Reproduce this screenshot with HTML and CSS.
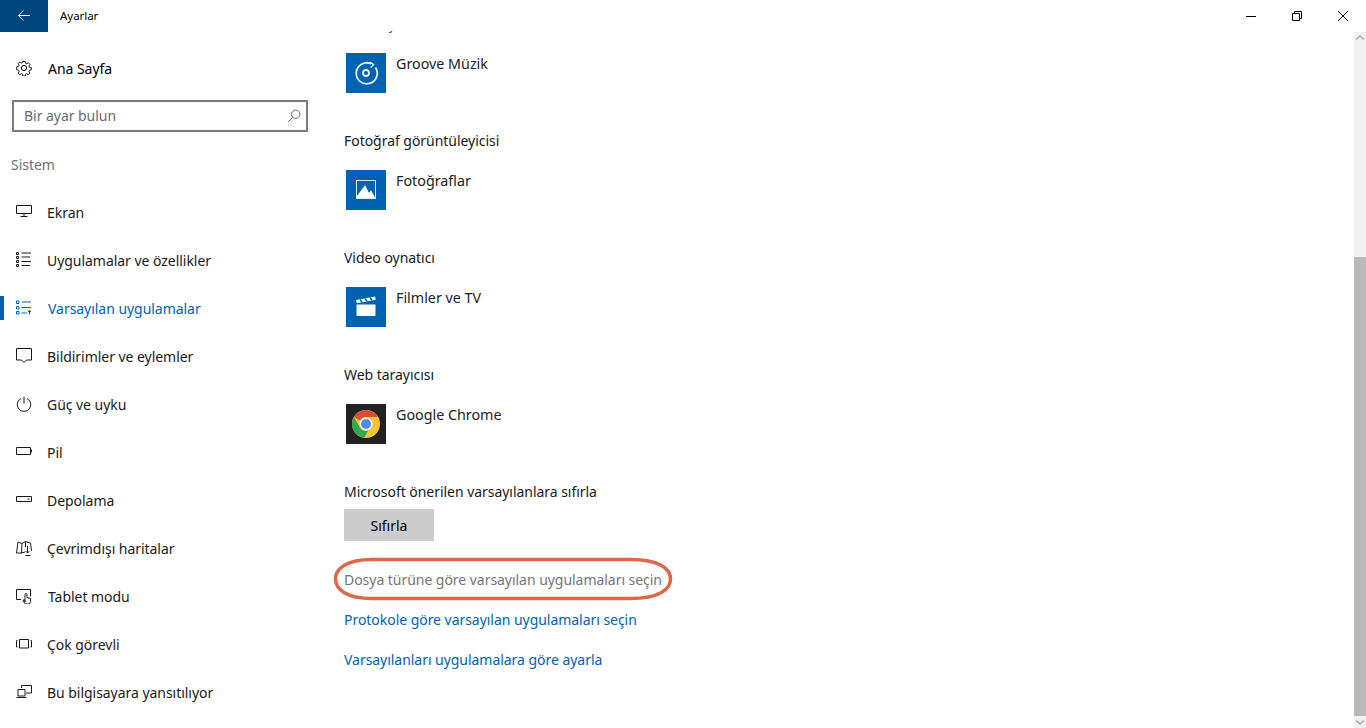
FILE: index.html
```html
<!DOCTYPE html>
<html lang="tr">
<head>
<meta charset="utf-8">
<title>Ayarlar</title>
<link rel="stylesheet" href="styles.css">
</head>
<body>
<div class="window">
  <header class="titlebar">
    <button class="back" aria-label="Geri"><svg width="16" height="16" viewBox="0 0 16 16" class="line"><path d="M14 7.500H2.500M7.500 2.500l-5 5 5 5"/></svg></button>
    <span class="title">Ayarlar</span>
    <div class="controls">
      <span class="ctl"><svg width="12" height="12" viewBox="0 0 12 12" class="line"><path d="M1 6.500h10"/></svg></span>
      <span class="ctl"><svg width="12" height="12" viewBox="0 0 12 12" class="line"><path d="M1.500 3.500h7v7h-7zM3.500 3.500v-2h7v7h-2"/></svg></span>
      <span class="ctl"><svg width="12" height="12" viewBox="0 0 12 12" class="line"><path d="M1 1l10 10M11 1 1 11"/></svg></span>
    </div>
  </header>
  <div class="body">
    <aside class="sidebar">
      <a class="home">
        <svg class="line ico" width="16" height="16" viewBox="0 0 16 16"><path d="M6.700.7h2.600l.4 2 1.300.6 1.800-1.100 1.800 1.800-1.100 1.800.6 1.300 2 .4v2.600l-2 .4-.6 1.300 1.100 1.800-1.800 1.800-1.800-1.100-1.300.6-.4 2H6.700l-.4-2-1.300-.6-1.800 1.100-1.800-1.800 1.100-1.800-.6-1.300-2-.4V6.700l2-.4.6-1.300-1.100-1.800 1.800-1.800 1.800 1.100 1.300-.6z" transform="translate(.8 .8) scale(.9)"/><circle cx="8" cy="8" r="2.600"/></svg>
        <span>Ana Sayfa</span>
      </a>
      <div class="search">
        <span class="placeholder">Bir ayar bulun</span>
        <svg class="line search-ico" width="14" height="14" viewBox="0 0 14 14"><circle cx="8.700" cy="5.300" r="4.200"/><path d="M5.700 8.300 1 13"/></svg>
      </div>
      <div class="section">Sistem</div>
      <nav class="nav">
        <a class="item"><svg class="line ico" width="16" height="16" viewBox="0 0 16 16"><path d="M.5 1.500h15v8H.5zM8 9.500v3M4.500 12.500h7"/></svg><span>Ekran</span></a>
        <a class="item"><svg class="line ico" width="16" height="16" viewBox="0 0 16 16"><path d="M.5.500h2v2h-2zM.5 4.500h2v2h-2zM.5 8.500h2v2h-2zM.5 12.500h2v2h-2zM5.500 1H15M5.500 5H14M5.500 9.500H15M5.500 13.500H14"/></svg><span>Uygulamalar ve özellikler</span></a>
        <a class="item active"><svg class="line ico" width="16" height="16" viewBox="0 0 16 16"><path d="M.5 1h2.500v2.500H.5zM.5 6.500h2.500V9H.5zM.5 11.500h2.500V14H.5zM5.500 2H15M5.500 7.500H15M5.500 13H11M13.500 14.500V10.500M12 12l1.500-1.500L15 12"/></svg><span>Varsayılan uygulamalar</span></a>
        <a class="item"><svg class="line ico" width="16" height="16" viewBox="0 0 16 16"><path d="M.5.500h15V12h-5L8 14.500 5.500 12h-5z"/></svg><span>Bildirimler ve eylemler</span></a>
        <a class="item"><svg class="line ico" width="16" height="16" viewBox="0 0 16 16"><path d="M5 2.500a6.800 6.800 0 1 0 6 0M8 .5v7"/></svg><span>Güç ve uyku</span></a>
        <a class="item"><svg class="line ico" width="16" height="16" viewBox="0 0 16 16"><path d="M.5 3.500h14v7H.5zM15.500 5.500v3"/></svg><span>Pil</span></a>
        <a class="item"><svg class="line ico" width="16" height="16" viewBox="0 0 16 16"><path d="M.5 4.500h15v5H.5zM11.500 7h2"/></svg><span>Depolama</span></a>
        <a class="item"><svg class="line ico" width="16" height="16" viewBox="0 0 16 16"><path d="M.5 13 2 2l4 1.500L9.500 1.500 14.500 3l1 8M6 3.500 5.500 13 .5 13M5.500 13l3.500-1M9.500 1.500V7M11.500 6v7M9.500 11l2 2 2-2M9.500 15.500h5"/></svg><span>Çevrimdışı haritalar</span></a>
        <a class="item tablet"><svg class="line ico" width="16" height="16" viewBox="0 0 16 16"><path d="M5 11.500H.5v-10h14v7M9 14V6.500a1 1 0 0 1 2 0v3l3.500 1v3l-1 2.500H9.500L7 13l1-1.500z"/></svg><span>Tablet modu</span></a>
        <a class="item"><svg class="line ico" width="16" height="16" viewBox="0 0 16 16"><path d="M3.500 3.500h9v8.500h-9zM1.500 4.500H.5v6.500h1M14.500 4.500h1v6.500h-1"/></svg><span>Çok görevli</span></a>
        <a class="item"><svg class="line ico" width="16" height="16" viewBox="0 0 16 16"><path d="M5.500 4V1.500h10V9H10M2 5.500h7V12H2zM.5 13.500h10"/></svg><span>Bu bilgisayara yansıtılıyor</span></a>
      </nav>
    </aside>
    <main class="main">
      <div class="scroll">
        <section class="group">
          <h2 class="label">Müzik çalar</h2>
          <div class="app">
            <span class="tile"><svg width="40" height="40" viewBox="0 0 40 40" fill="none" stroke="#fff" stroke-width="1.800" stroke-opacity=".9"><path d="M29.500 14.500A10.500 10.500 0 1 1 25 10.700"/><path d="M24 9l3.600 2.600-3 3" stroke-width="1.300"/><circle cx="20" cy="20" r="3"/></svg></span>
            <span class="app-name">Groove Müzik</span>
          </div>
        </section>
        <section class="group">
          <h2 class="label">Fotoğraf görüntüleyicisi</h2>
          <div class="app">
            <span class="tile"><svg width="40" height="40" viewBox="0 0 40 40"><path d="M10 10h20v19H10z" fill="#dfeaf5"/><path d="M11 11h18v17l-4-7-2 3-4-8-8 11z" fill="#0063b1"/><path d="M11 26l8-11 4 8 2-3 4 8H11z" fill="#fff"/></svg></span>
            <span class="app-name">Fotoğraflar</span>
          </div>
        </section>
        <section class="group">
          <h2 class="label">Video oynatıcı</h2>
          <div class="app">
            <span class="tile"><svg width="40" height="40" viewBox="0 0 40 40"><path d="M10.500 17.500h19V28a1 1 0 0 1-1 1h-17a1 1 0 0 1-1-1z" fill="#fff"/><path d="M10 13l19-3.500.8 3.300-19 3.500z" fill="#fff"/><path d="M14 12.300l2 3M19 11.400l2 3M24 10.500l2 3" stroke="#0063b1" stroke-width="1.500"/></svg></span>
            <span class="app-name">Filmler ve TV</span>
          </div>
        </section>
        <section class="group">
          <h2 class="label">Web tarayıcısı</h2>
          <div class="app">
            <span class="tile dark"><svg width="40" height="40" viewBox="0 0 40 40"><circle cx="20" cy="20" r="14" fill="#f6c434"/><path d="M20 6A14 14 0 0 1 32.100 13H20a7 7 0 0 0-6.100 3.500L7.900 13A14 14 0 0 1 20 6z" fill="#dc4c3e"/><path d="M7.900 13l6 10.500a7 7 0 0 0 8.500 3.100L18 33.900A14 14 0 0 1 7.900 13z" fill="#31a853"/><circle cx="20" cy="20" r="6.500" fill="#fff"/><circle cx="20" cy="20" r="5" fill="#4c8bf0"/></svg></span>
            <span class="app-name">Google Chrome</span>
          </div>
        </section>
        <section class="reset">
          <h2 class="label">Microsoft önerilen varsayılanlara sıfırla</h2>
          <button class="btn">Sıfırla</button>
        </section>
        <div class="links">
          <a class="link muted">Dosya türüne göre varsayılan uygulamaları seçin
            <svg class="oval" width="344" height="46" viewBox="0 0 344 46"><path d="M40 3.500H298C328 3.500 338.500 13 338.500 23S328 42.500 298 42.500H40C14 42.500 3.500 33 3.500 23S14 3.500 40 3.500z"/></svg>
          </a>
          <a class="link">Protokole göre varsayılan uygulamaları seçin</a>
          <a class="link">Varsayılanları uygulamalara göre ayarla</a>
        </div>
      </div>
    </main>
    <div class="scrollbar">
      <svg class="arrow" width="12" height="12" viewBox="0 0 12 12"><path d="M2 7.500 6 4l4 3.500"/></svg>
      <div class="track"></div>
      <div class="thumb"></div>
      <svg class="arrow" width="12" height="12" viewBox="0 0 12 12"><path d="M2 4.500 6 8l4-3.500"/></svg>
    </div>
  </div>
</div>
</body>
</html>
```
FILE: styles.css
```css
* { box-sizing: border-box; }
html, body { margin: 0; height: 100%; }
body {
  font-family: "Noto Sans", "Open Sans", sans-serif;
  font-size: 14px;
  letter-spacing: -0.04px;
  color: #1a1a1a;
  background: #fff;
  overflow: hidden;
}
.window { display: flex; flex-direction: column; width: 1366px; height: 728px; }
.line { fill: none; stroke: currentColor; stroke-width: 1; }
.titlebar { display: flex; align-items: center; height: 32px; flex: none; position: relative; z-index: 1; }
.back {
  width: 48px; height: 32px; border: 0; padding: 0;
  background: #00457c; color: #fff;
  display: flex; align-items: center; justify-content: center;
}
.title { margin: 0 0 2px 12px; font-size: 11.500px; color: #000; }
.controls { margin-left: auto; display: flex; }
.ctl { width: 46px; height: 32px; display: flex; align-items: center; justify-content: center; color: #000; }
.body { flex: 1; display: flex; min-height: 0; }
.sidebar { width: 320px; flex: none; display: flex; flex-direction: column; }
.home { display: flex; align-items: center; height: 32px; margin-top: 20px; padding-left: 16px; color: #000; }
.home span { margin-left: 16px; }
.ico { flex: none; }
.search {
  margin: 16px 12px 0; height: 32px; border: 2px solid #7a7a7a;
  display: flex; align-items: center; justify-content: space-between; padding: 0 5px 0 10px;
}
.placeholder { color: #6b6b6b; margin-bottom: 2px; }
.search-ico { color: #666; }
.section { margin: 22px 0 0 11px; height: 22px; line-height: 22px; color: #6e6e6e; }
.nav { display: flex; flex-direction: column; margin-top: 12px; }
.item { position: relative; display: flex; align-items: center; height: 48px; padding-left: 16px; color: #1a1a1a; }
.item span { margin-left: 15px; }
.item.tablet span { margin-left: 16px; }
.item.active { color: #0063b1; }
.item.active span { margin-left: 16px; }
.item.active::before { content: ""; position: absolute; left: 0; top: 12px; width: 4px; height: 24px; background: #0063b1; }
.main { flex: 1; margin-top: -1px; overflow: hidden; padding-left: 24px; }
.scroll { margin-top: -17px; }
.group { height: 117px; }
.label { margin: 0; height: 20px; line-height: 20px; font-size: 14px; font-weight: 400; color: #1a1a1a; }
.app { display: flex; margin: 19px 0 0 2px; }
.tile { width: 40px; height: 40px; background: #0063b1; display: block; flex: none; }
.tile svg { display: block; }
.tile.dark { background: #222; }
.app-name { margin: 1px 0 0 10px; line-height: 20px; font-size: 14.300px; letter-spacing: 0; color: #222; }
.btn {
  display: block; width: 90px; height: 32px; border: 0; margin-top: 7px; padding: 0;
  background: #ccc; color: #000; font: inherit;
}
.links { display: flex; flex-direction: column; gap: 20px; margin-top: 29px; }
.link { position: relative; height: 20px; line-height: 20px; color: #0063b1; width: max-content; }
.link.muted { color: #767676; }
.oval { position: absolute; left: -12px; top: -14px; fill: none; stroke: #db6849; stroke-width: 3.500; }
.scrollbar { width: 12px; flex: none; display: flex; flex-direction: column; background: #f0f0f0; }
.arrow { flex: none; fill: none; stroke: #a8a8a8; stroke-width: 1.500; }
.track { height: 213px; flex: none; }
.thumb { flex: 1; background: #b9b9b9; }
```
